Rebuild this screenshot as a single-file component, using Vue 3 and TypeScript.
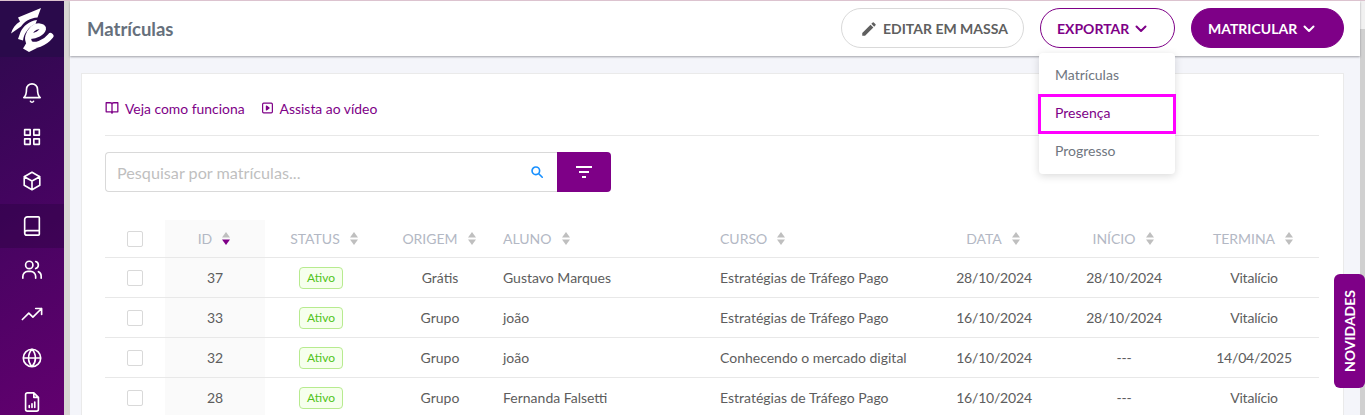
<template>
  <div class="app-shell">
    <aside class="sidebar">
      <div class="logo">
        <svg width="64" height="56" viewBox="0 0 64 56" fill="none">
          <path d="M18 16.500 41 7 37.500 16.500C30 17 24.500 20.500 21 25.500L11 32.500C12.500 27 15.500 23 20 20.500Z" fill="#fff" />
          <path d="M37 19C29 20 23.500 25 20.500 31L18 38 23 39.500C24 32 29 25.500 35.500 23Z" fill="#fff" />
          <path d="M29.500 35C36 35.500 42 31.500 43 28 43.500 25 37 24 32.500 28 28.500 32 26.500 38 29.500 42 34 46.500 45 42 50.500 35" stroke="#fff" stroke-width="6" stroke-linecap="round" stroke-linejoin="round" />
          <path d="M23 47.500 29 51 37 47 27 41Z" fill="#fff" />
        </svg>
      </div>
      <nav class="menu">
        <a v-for="item in menuItems" :key="item.name" class="menu-item" :class="{ active: item.active }">
          <svg width="22" height="22" viewBox="0 0 24 24" fill="none" stroke="#fff" stroke-width="1.800" stroke-linecap="round" stroke-linejoin="round">
            <path :d="item.d" />
          </svg>
        </a>
      </nav>
    </aside>
    <div class="side-strip"></div>

    <main class="main">
      <header class="topbar">
        <h1 class="title">Matrículas</h1>
        <div class="actions">
          <button class="btn btn-ghost">
            <svg width="18" height="18" viewBox="0 0 24 24" fill="#5f5f5f"><path d="M3 17.250V21h3.750L17.810 9.940l-3.750-3.750L3 17.250zM20.710 7.040a1 1 0 0 0 0-1.410l-2.340-2.340a1 1 0 0 0-1.410 0l-1.830 1.830 3.750 3.750 1.830-1.830z" /></svg>
            EDITAR EM MASSA
          </button>
          <div class="export-wrap">
            <button class="btn btn-outline">
              EXPORTAR
              <svg class="chev" width="12" height="8" viewBox="0 0 12 8" fill="none" stroke="currentColor" stroke-width="2" stroke-linecap="round" stroke-linejoin="round"><path d="M1.500 1.500 6 6l4.500-4.500" /></svg>
            </button>
            <ul class="dropdown">
              <li v-for="opt in exportOptions" :key="opt" class="dropdown-item" :class="{ focused: opt === 'Presença' }">{{ opt }}</li>
            </ul>
          </div>
          <button class="btn btn-solid">
            MATRICULAR
            <svg class="chev" width="12" height="8" viewBox="0 0 12 8" fill="none" stroke="currentColor" stroke-width="2" stroke-linecap="round" stroke-linejoin="round"><path d="M1.500 1.500 6 6l4.500-4.500" /></svg>
          </button>
        </div>
      </header>

      <section class="card">
        <div class="links">
          <a class="link">
            <svg width="14" height="14" viewBox="0 0 24 24" fill="none" stroke="currentColor" stroke-width="2.200" stroke-linejoin="round"><path d="M2 3h7a3 3 0 0 1 3 3v15a2.500 2.500 0 0 0-2.500-2.500H2zM22 3h-7a3 3 0 0 0-3 3v15a2.500 2.500 0 0 1 2.500-2.500H22z" /></svg>
            Veja como funciona
          </a>
          <a class="link">
            <svg width="13" height="14" viewBox="0 0 24 24" fill="none" stroke="currentColor" stroke-width="2.200" stroke-linejoin="round"><rect x="3" y="3" width="18" height="18" rx="2" /><path d="M10 8.500 15 12l-5 3.500z" fill="currentColor" /></svg>
            Assista ao vídeo
          </a>
        </div>

        <div class="search-row">
          <div class="search-box">
            <span class="placeholder">Pesquisar por matrículas...</span>
            <svg width="14" height="14" viewBox="0 0 24 24" fill="none" stroke="#1890ff" stroke-width="2.800" stroke-linecap="round"><circle cx="10" cy="10" r="6.500" /><path d="m15 15 6 6" /></svg>
          </div>
          <button class="filter-btn">
            <svg width="18" height="14" viewBox="0 0 18 14" fill="#fff"><rect x="1" y="1" width="16" height="2" /><rect x="4" y="6" width="10" height="2" /><rect x="7" y="11" width="4" height="2" /></svg>
          </button>
        </div>

        <table class="grid">
          <colgroup>
            <col v-for="(w, i) in colWidths" :key="i" :style="{ width: w + 'px' }" />
          </colgroup>
          <thead>
            <tr>
              <th class="check-col"><span class="check"></span></th>
              <th v-for="col in columns" :key="col.label" :class="[col.align, { sorted: col.label === 'ID' }]">
                <span class="th-inner">
                  {{ col.label }}
                  <svg class="sorter" width="8" height="13" viewBox="0 0 8 13">
                    <path d="M4 0 8 5.500H0z" fill="#bfbfbf" />
                    <path d="M0 7.500h8L4 13z" :fill="col.label === 'ID' ? '#7e0087' : '#bfbfbf'" />
                  </svg>
                </span>
              </th>
            </tr>
          </thead>
          <tbody>
            <tr v-for="row in rows" :key="row.id">
              <td class="check-col"><span class="check"></span></td>
              <td class="center sorted">{{ row.id }}</td>
              <td class="center"><span class="tag">Ativo</span></td>
              <td class="center">{{ row.origem }}</td>
              <td>{{ row.aluno }}</td>
              <td>{{ row.curso }}</td>
              <td class="center date">{{ row.data }}</td>
              <td class="center date">{{ row.inicio }}</td>
              <td class="center date">{{ row.termina }}</td>
            </tr>
          </tbody>
        </table>
      </section>
    </main>

    <div class="scroll-track"><div class="scroll-thumb"></div></div>
    <div class="novidades"><span>NOVIDADES</span></div>
  </div>
</template>

<script setup lang="ts">
const menuItems = [
  { name: "avisos", d: "M6 8a6 6 0 0 1 12 0c0 7 3 9 3 9H3s3-2 3-9M10.300 21a1.900 1.900 0 0 0 3.400 0" },
  { name: "painel", d: "M4 4h6v6H4zM14 4h6v6h-6zM4 14h6v6H4zM14 14h6v6h-6z" },
  { name: "produtos", d: "M12 2.500 20.500 7.300v9.400L12 21.500l-8.500-4.800V7.300zM3.500 7.300 12 12l8.500-4.700M12 12v9.500" },
  { name: "cursos", d: "M4 19.500V5a3 3 0 0 1 3-3h12a1 1 0 0 1 1 1v18a1 1 0 0 1-1 1H6.500A2.500 2.500 0 0 1 4 19.500zM4 19.500A2.500 2.500 0 0 1 6.500 17H20", active: true },
  { name: "alunos", d: "M2 21v-2a5.500 5.500 0 0 1 5.500-5.500h3A5.500 5.500 0 0 1 16 19v2M9 10.500a4 4 0 1 0 0-8 4 4 0 0 0 0 8zM16 2.700a4 4 0 0 1 0 7.700M19 13.800a5 5 0 0 1 3 4.700V21" },
  { name: "vendas", d: "M1.500 18 8.500 11l4.500 4.500L22.500 6M16 6h6.500v6.500" },
  { name: "site", d: "M12 2.500a9.500 9.500 0 1 0 0 19 9.500 9.500 0 0 0 0-19zM2.500 12h19M12 2.500c-5 5.500-5 13.500 0 19M12 2.500c5 5.500 5 13.500 0 19" },
  { name: "relatorios", d: "M14 2H7a2 2 0 0 0-2 2v16a2 2 0 0 0 2 2h10a2 2 0 0 0 2-2V7zM14 2v5h5M9 18v-2M12 18v-4M15 18v-6" },
];

const exportOptions = ["Matrículas", "Presença", "Progresso"];

const colWidths = [60, 100, 112, 126, 217, 209, 130, 130, 130];

const columns = [
  { label: "ID", align: "center" },
  { label: "STATUS", align: "center" },
  { label: "ORIGEM", align: "center" },
  { label: "ALUNO", align: "left" },
  { label: "CURSO", align: "left" },
  { label: "DATA", align: "center" },
  { label: "INÍCIO", align: "center" },
  { label: "TERMINA", align: "center" },
];

const rows = [
  { id: 37, origem: "Grátis", aluno: "Gustavo Marques", curso: "Estratégias de Tráfego Pago", data: "28/10/2024", inicio: "28/10/2024", termina: "Vitalício" },
  { id: 33, origem: "Grupo", aluno: "joão", curso: "Estratégias de Tráfego Pago", data: "16/10/2024", inicio: "28/10/2024", termina: "Vitalício" },
  { id: 32, origem: "Grupo", aluno: "joão", curso: "Conhecendo o mercado digital", data: "16/10/2024", inicio: "---", termina: "14/04/2025" },
  { id: 28, origem: "Grupo", aluno: "Fernanda Falsetti", curso: "Estratégias de Tráfego Pago", data: "16/10/2024", inicio: "---", termina: "Vitalício" },
];
</script>

<style>
html,
body {
  margin: 0;
  height: 415px;
  overflow: hidden;
}
</style>

<style scoped>
.app-shell {
  position: relative;
  display: flex;
  height: 414px;
  overflow: hidden;
  border-top: 1px solid #dcc3cf;
  font-family: Lato, "Liberation Sans", sans-serif;
  background: #f4f5fa;
}

.sidebar {
  flex: 0 0 64px;
  background: linear-gradient(150deg, #2c0a4c 0%, #43045f 45%, #62006f 100%);
}

.logo {
  height: 56px;
  background: #2a0a4b;
}

.logo svg {
  display: block;
}

.menu {
  display: flex;
  flex-direction: column;
  padding-top: 14px;
}

.menu-item {
  display: flex;
  align-items: center;
  justify-content: center;
  flex: 0 0 44.2px;
}

.menu-item.active {
  background: rgba(30, 5, 50, 0.28);
}

.side-strip {
  flex: 0 0 6px;
  background: #d8d6d3;
}

.main {
  flex: 1;
  min-width: 0;
}

.topbar {
  position: relative;
  display: flex;
  align-items: center;
  justify-content: space-between;
  height: 55px;
  padding: 0 16px 0 17px;
  background: #fff;
  box-shadow: 0 1px 2px rgba(60, 60, 70, 0.45);
}

.title {
  margin: 0;
  color: #66707c;
  font-size: 18.500px;
  font-weight: 700;
}

.actions {
  display: flex;
  gap: 16px;
  margin-bottom: 1px;
}

.btn {
  display: flex;
  align-items: center;
  height: 40px;
  padding: 1px 0 0 16px;
  border-radius: 20px;
  font-family: inherit;
  font-size: 14px;
  font-weight: 700;
  box-sizing: border-box;
}

.btn-ghost {
  gap: 5px;
  width: 183px;
  padding-left: 18px;
  background: #fff;
  border: 1px solid #d9d9d9;
  color: #5f5f5f;
}

.btn-outline {
  gap: 6px;
  width: 135px;
  background: #fff;
  border: 1px solid #7e0087;
  color: #7e0087;
}

.btn-solid {
  gap: 6px;
  width: 153px;
  background: #7e0087;
  border: 1px solid #7e0087;
  color: #fff;
}

.export-wrap {
  position: relative;
}

.dropdown {
  position: absolute;
  top: 45px;
  left: -1px;
  z-index: 5;
  width: 136px;
  margin: 0;
  padding: 4px 0 3px;
  list-style: none;
  background: #fff;
  border-radius: 4px;
  box-shadow: 0 2px 8px rgba(0, 0, 0, 0.15);
}

.dropdown-item {
  height: 38px;
  line-height: 36px;
  padding-left: 16px;
  font-size: 14px;
  color: #6f7680;
}

.dropdown-item.focused {
  color: #7e0087;
  outline: 3px solid #ff00ff;
  outline-offset: -2px;
}

.card {
  height: 400px;
  margin: 17px 16px 0 11px;
  padding: 26px 24px 0 23px;
  box-sizing: border-box;
  background: #fff;
  border: 1px solid #eaeaea;
}

.links {
  display: flex;
  gap: 16px;
  height: 35px;
  border-bottom: 1px solid #e8e8e8;
}

.link {
  display: flex;
  align-items: flex-start;
  gap: 6px;
  height: 18px;
  font-size: 13.900px;
  line-height: 18px;
  color: #7e0087;
}

.link svg {
  margin-top: 1px;
}

.search-row {
  display: flex;
  margin-top: 16px;
}

.search-box {
  display: flex;
  align-items: center;
  justify-content: space-between;
  width: 452px;
  height: 40px;
  padding: 0 13px 0 11px;
  box-sizing: border-box;
  border: 1px solid #d9d9d9;
  border-right: 0;
  border-radius: 4px 0 0 4px;
}

.placeholder {
  font-size: 16.200px;
  color: #bfbfbf;
}

.filter-btn {
  display: flex;
  align-items: center;
  justify-content: center;
  width: 54px;
  height: 40px;
  padding: 0;
  border: 0;
  border-radius: 0 4px 4px 0;
  background: #7e0087;
}

.grid {
  width: 1214px;
  margin-top: 28px;
  border-collapse: collapse;
  table-layout: fixed;
  font-size: 14px;
  color: #5d5d5d;
}

.grid th {
  height: 37px;
  padding: 0;
  font-weight: 400;
  color: #b3b8c4;
  border-bottom: 1px solid #e8e8e8;
}

.grid th.center {
  padding-right: 2px;
}

.grid th:nth-child(3) {
  padding: 0 0 0 6px;
}

.grid td {
  height: 39px;
  padding: 0;
  border-bottom: 1px solid #e8e8e8;
}

.left {
  text-align: left;
}

.center {
  text-align: center;
}

.date {
  letter-spacing: -0.2px;
}

.sorted {
  background: #fafafa;
}

.th-inner {
  display: inline-flex;
  align-items: center;
  gap: 10px;
}

.check {
  display: block;
  width: 14px;
  height: 14px;
  margin: 0 auto;
  border: 1px solid #d9d9d9;
  border-radius: 2px;
  background: #fff;
}

.tag {
  display: inline-block;
  width: 44px;
  height: 22px;
  line-height: 20px;
  box-sizing: border-box;
  font-size: 12px;
  text-align: center;
  color: #52c41a;
  background: #f6ffed;
  border: 1px solid #b7eb8f;
  border-radius: 4px;
}

.scroll-track {
  flex: 0 0 5px;
  padding-top: 28px;
  background: #f1f1f1;
}

.scroll-thumb {
  height: 100%;
  background: #d0d0d0;
}

.novidades {
  position: absolute;
  top: 273px;
  right: 0;
  display: flex;
  align-items: center;
  justify-content: center;
  width: 31px;
  height: 114px;
  border-radius: 6px;
  background: #7e0087;
  color: #fff;
  font-size: 14px;
  font-weight: 700;
}

.novidades span {
  writing-mode: vertical-rl;
  transform: rotate(180deg);
}
</style>
